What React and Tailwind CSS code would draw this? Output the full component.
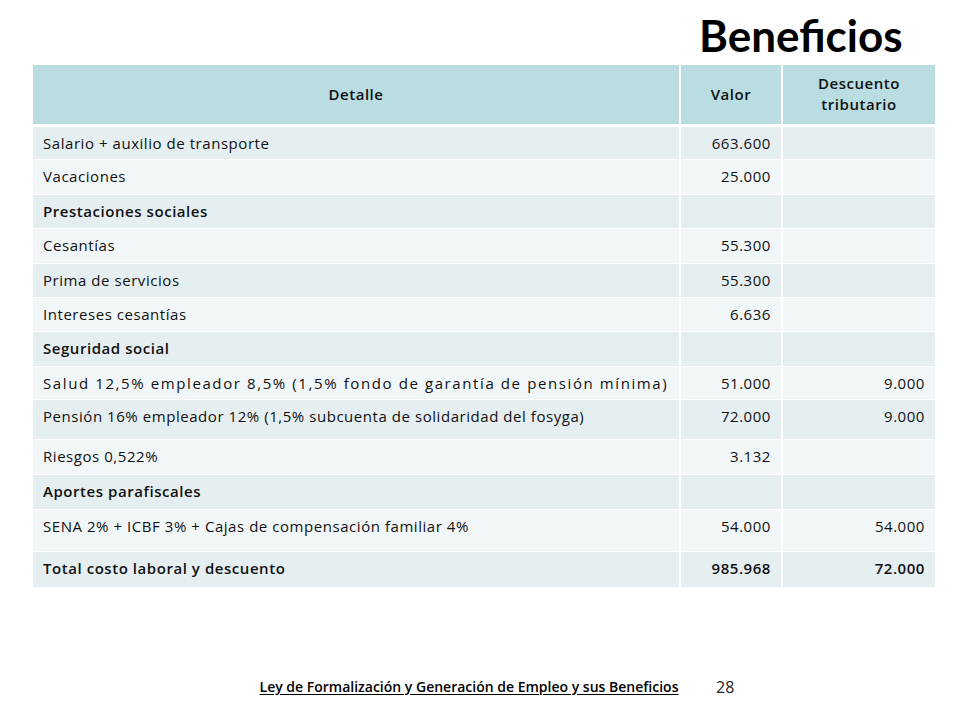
import React from 'react';

const rows = [
  { label: 'Salario + auxilio de transporte', valor: '663.600', desc: '', h: 'h-[34px]' },
  { label: 'Vacaciones', valor: '25.000', desc: '', h: 'h-[35px]' },
  { label: 'Prestaciones sociales', valor: '', desc: '', bold: true, h: 'h-[34px]' },
  { label: 'Cesantías', valor: '55.300', desc: '', h: 'h-[35px]' },
  { label: 'Prima de servicios', valor: '55.300', desc: '', h: 'h-[34px]' },
  { label: 'Intereses cesantías', valor: '6.636', desc: '', h: 'h-[34px]' },
  { label: 'Seguridad social', valor: '', desc: '', bold: true, h: 'h-[35px]' },
  { label: 'Salud 12,5% empleador 8,5% (1,5% fondo de garantía de pensión mínima)', valor: '51.000', desc: '9.000', h: 'h-[33px]', wide: true },
  { label: 'Pensión 16% empleador 12% (1,5% subcuenta de solidaridad del fosyga)', valor: '72.000', desc: '9.000', h: 'h-[40px]' },
  { label: 'Riesgos 0,522%', valor: '3.132', desc: '', h: 'h-[35px]' },
  { label: 'Aportes parafiscales', valor: '', desc: '', bold: true, h: 'h-[35px]' },
  { label: 'SENA 2% + ICBF 3% + Cajas de compensación familiar 4%', valor: '54.000', desc: '54.000', h: 'h-[42px]' },
  { label: 'Total costo laboral y descuento', valor: '985.968', desc: '72.000', bold: true, all: true, h: 'h-[36px]' },
];

export default function App() {
  return (
    <div className="w-[960px] h-[720px] bg-white relative overflow-hidden text-[#111]" style={{ fontFamily: '"Open Sans", Lato, sans-serif' }}>
      <h1 className="pt-[10px] pl-[699px] text-[44px] leading-[50px] font-bold text-black" style={{ fontFamily: 'Lato, sans-serif' }}>Beneficios</h1>

      <table className="ml-[33px] mt-[5px] w-[902px] border-collapse text-[15px] leading-[18px] tracking-[0.55px]">
        <colgroup>
          <col className="w-[647px]" />
          <col className="w-[102px]" />
          <col className="w-[153px]" />
        </colgroup>
        <thead>
          <tr className="h-[60px] bg-[#b9dde1] border-b-[3px] border-white">
            <th className="font-semibold text-center">Detalle</th>
            <th className="font-semibold text-center border-l-2 border-white">Valor</th>
            <th className="font-semibold text-center border-l-2 border-white leading-[21px]">Descuento<br />tributario</th>
          </tr>
        </thead>
        <tbody>
          {rows.map((r, i) => (
            <tr key={i} className={`${r.h} ${i % 2 === 0 ? 'bg-[#e5eff1]' : 'bg-[#f1f6f8]'} border-b border-white`}>
              <td className={`pl-[10px] align-top pt-[7px] ${r.bold ? 'font-semibold' : ''} ${r.wide ? 'tracking-[1.6px]' : ''}`}>{r.label}</td>
              <td className={`pr-[10px] text-right align-top pt-[7px] border-l-2 border-white ${r.all ? 'font-semibold' : ''}`}>{r.valor}</td>
              <td className={`pr-[10px] text-right align-top pt-[7px] border-l-2 border-white ${r.all ? 'font-semibold' : ''}`}>{r.desc}</td>
            </tr>
          ))}
        </tbody>
      </table>

      <div className="absolute left-0 top-[676px] w-[960px] flex items-center">
        <div className="w-[938px] text-center text-[14px] font-semibold underline underline-offset-2 text-black">
          Ley de Formalización y Generación de Empleo y sus Beneficios
        </div>
      </div>
      <div className="absolute left-[716px] top-[675px] text-[16px] text-[#222]">28</div>
    </div>
  );
}
